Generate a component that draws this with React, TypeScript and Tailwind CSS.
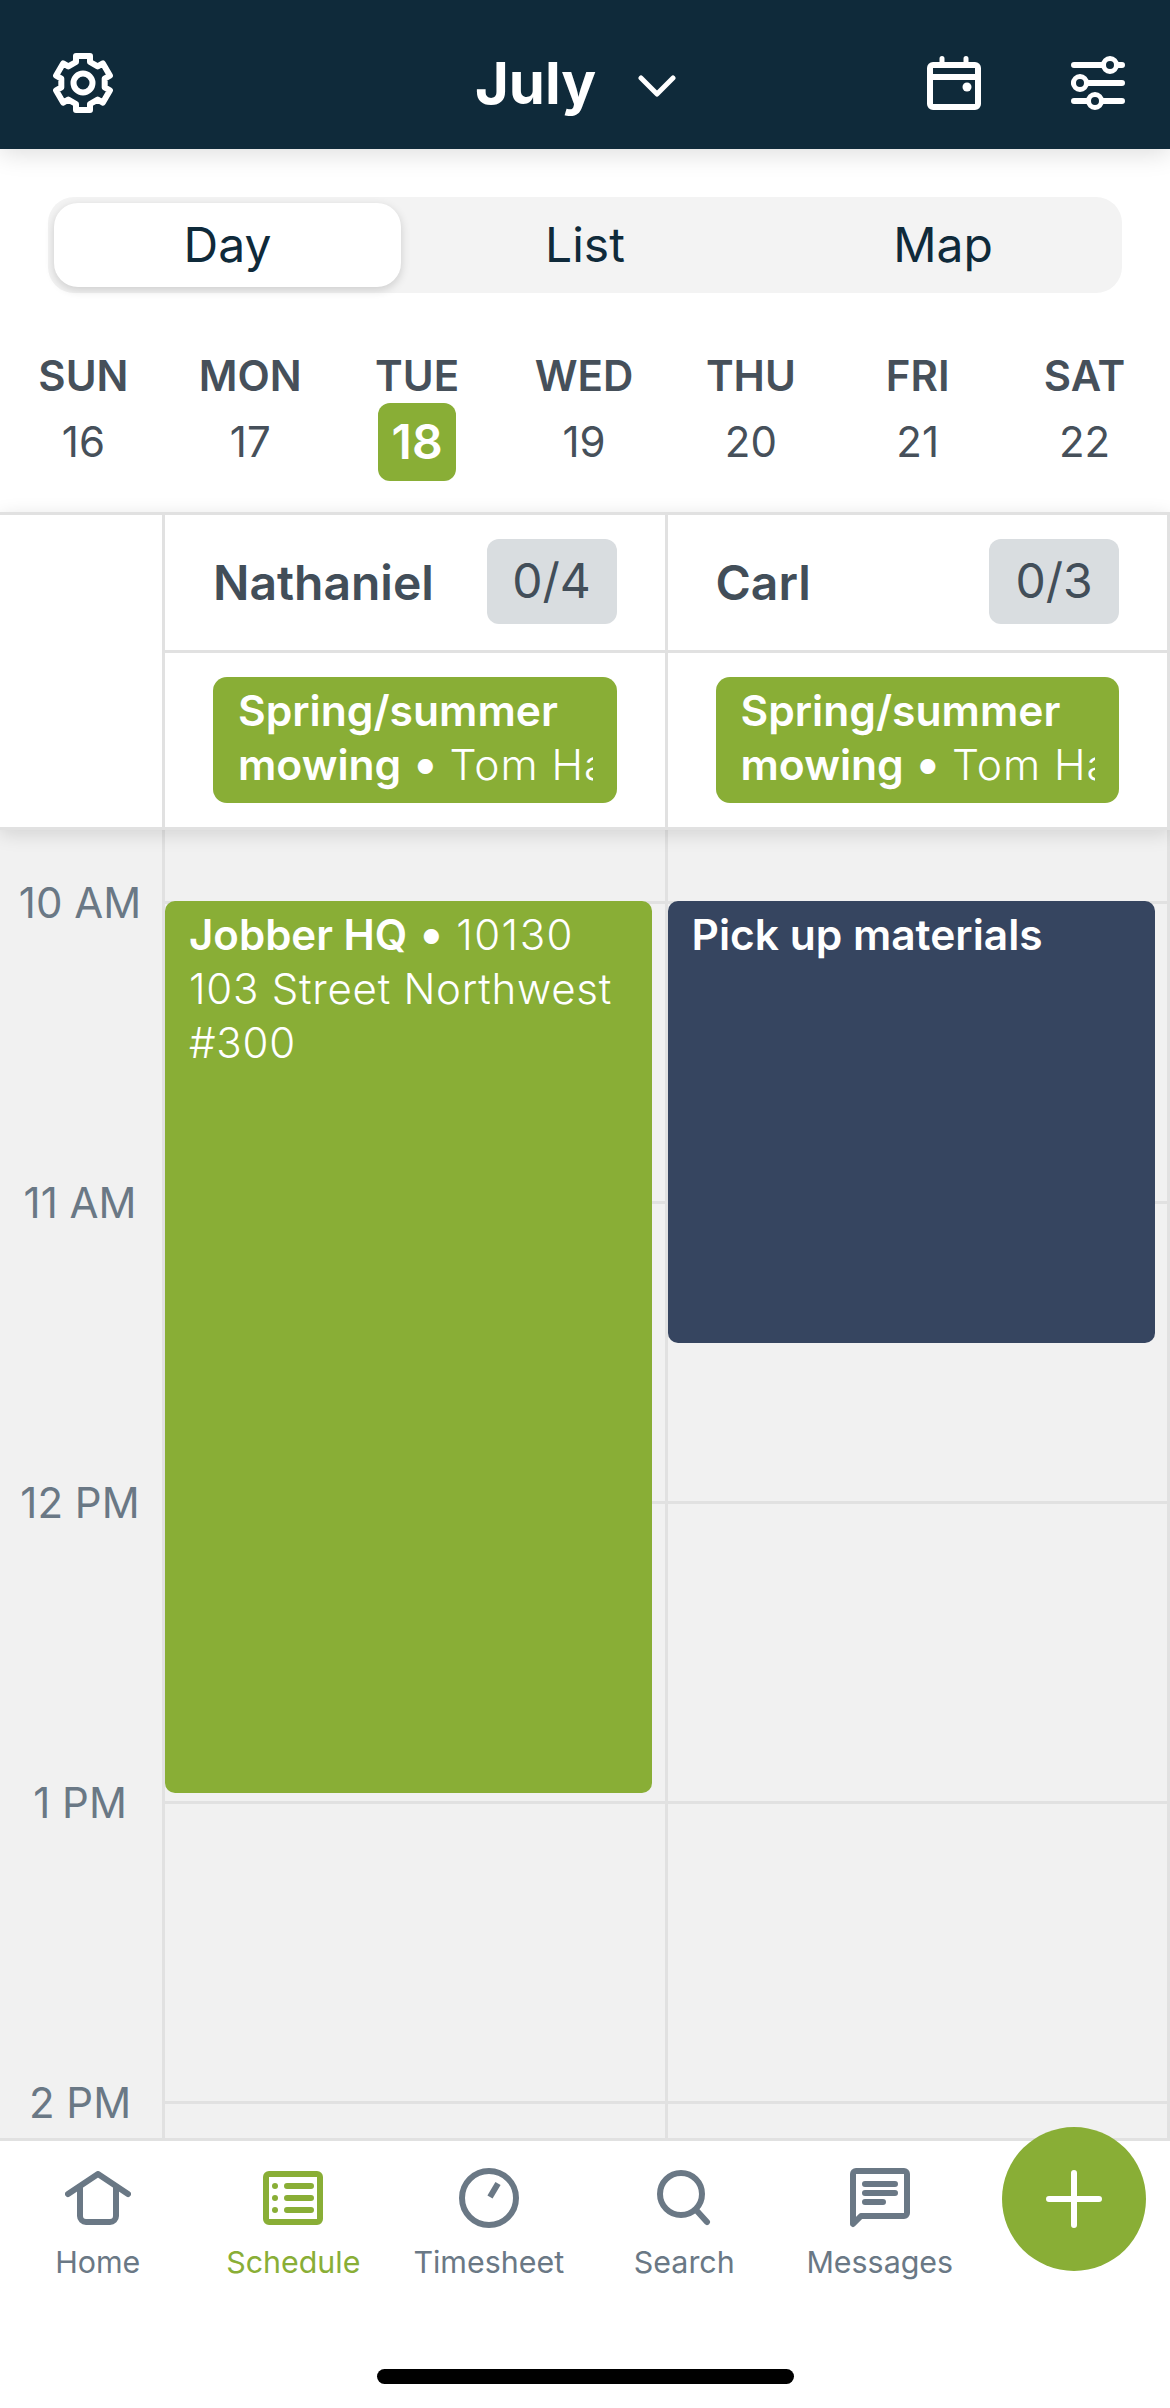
const GREEN = 'bg-[#89ae36]'

const days = [
  ['SUN', '16'],
  ['MON', '17'],
  ['TUE', '18'],
  ['WED', '19'],
  ['THU', '20'],
  ['FRI', '21'],
  ['SAT', '22'],
]

const hours = ['10 AM', '11 AM', '12 PM', '1 PM', '2 PM', '3 PM']

// cog outline: six flat teeth round a 30,30 centre
const cogPath = Array.from({ length: 6 }, (_, i) => {
  const a = (i * Math.PI) / 3
  const pt = (x: number, y: number) =>
    `${(30 + x * Math.cos(a) - y * Math.sin(a)).toFixed(2)} ${(30 + x * Math.sin(a) + y * Math.cos(a)).toFixed(2)}`
  return `${i === 0 ? 'M' : 'L'}${pt(-7, -21)} L${pt(-7, -27)} L${pt(7, -27)} L${pt(7, -21)}`
}).join(' ') + ' Z'

function Gear() {
  return (
    <svg width="60" height="60" viewBox="0 0 60 60" fill="none" stroke="white" strokeWidth="6" strokeLinejoin="round">
      <path d={cogPath} />
      <circle cx="30" cy="30" r="9.5" />
    </svg>
  )
}

function CalendarIcon() {
  return (
    <svg width="54" height="54" viewBox="0 0 54 54" fill="none" stroke="white" strokeWidth="6" strokeLinecap="round">
      <rect x="3" y="9" width="48" height="42" rx="3" />
      <path d="M3 21H51" strokeLinecap="butt" />
      <path d="M15 2.5V9M39 2.5V9" strokeWidth="5" />
      <circle cx="40" cy="31" r="4.5" fill="white" stroke="none" />
    </svg>
  )
}

function SlidersIcon() {
  return (
    <svg width="54" height="54" viewBox="0 0 54 54" fill="none" stroke="white" strokeWidth="6" strokeLinecap="round">
      <path d="M3 9H51M3 27H51M3 45H51" />
      <circle cx="39" cy="9" r="6.5" fill="#0f2a3a" strokeWidth="5" />
      <circle cx="9" cy="27" r="6.5" fill="#0f2a3a" strokeWidth="5" />
      <circle cx="24" cy="45" r="6.5" fill="#0f2a3a" strokeWidth="5" />
    </svg>
  )
}

function HomeIcon() {
  return (
    <svg width="66" height="54" viewBox="0 0 66 54" fill="none" stroke="#6a7885" strokeWidth="6" strokeLinecap="round" strokeLinejoin="round">
      <path d="M3 23L33 3L63 23" />
      <path d="M15 16V45a6 6 0 0 0 6 6H45a6 6 0 0 0 6-6V16" />
    </svg>
  )
}

function ScheduleIcon() {
  return (
    <svg width="60" height="54" viewBox="0 0 60 54" fill="none" stroke="#89ae36" strokeWidth="6" strokeLinecap="round">
      <rect x="3" y="3" width="54" height="48" rx="3" />
      <path d="M24 15H48M24 27H48M24 39H48" />
      <circle cx="12" cy="15" r="3" fill="#89ae36" stroke="none" />
      <circle cx="12" cy="27" r="3" fill="#89ae36" stroke="none" />
      <circle cx="12" cy="39" r="3" fill="#89ae36" stroke="none" />
    </svg>
  )
}

function ClockIcon() {
  return (
    <svg width="60" height="60" viewBox="0 0 60 60" fill="none" stroke="#6a7885" strokeWidth="6">
      <circle cx="30" cy="30" r="27" />
      <path d="M31 29L39 15.5" />
    </svg>
  )
}

function SearchIcon() {
  return (
    <svg width="54" height="56" viewBox="0 0 54 56" fill="none" stroke="#6a7885" strokeWidth="6" strokeLinecap="round">
      <circle cx="24" cy="24" r="21" />
      <path d="M40 41L50 52" />
    </svg>
  )
}

function MessageIcon() {
  return (
    <svg width="60" height="60" viewBox="0 0 60 60" fill="none" stroke="#6a7885" strokeWidth="6" strokeLinecap="round" strokeLinejoin="round">
      <path d="M3 56V6a3 3 0 0 1 3-3H54a3 3 0 0 1 3 3V45a3 3 0 0 1-3 3H11Z" />
      <path d="M15 16H45M15 25H45M15 34H33" />
    </svg>
  )
}

function PlusIcon() {
  return (
    <svg width="56" height="58" viewBox="0 0 56 58" fill="none" stroke="white" strokeWidth="6" strokeLinecap="round">
      <path d="M28 3V55M3 29H53" />
    </svg>
  )
}

function StaffHeader({ name, count }: { name: string; count: string }) {
  return (
    <div className="flex-1 min-w-0 border-l-[3px] border-[#e1e1e1] last:border-r-[3px] flex flex-col">
      <div className="h-[135px] flex items-center justify-between pl-[48px] pr-[48px]">
        <span className="text-[48px] font-semibold text-[#424e59] leading-none">{name}</span>
        <span className="-mt-[3px] w-[130px] h-[85px] rounded-[12px] bg-[#d9dde0] flex items-center justify-center text-[48px] text-[#424e59] leading-none">
          {count}
        </span>
      </div>
      <div className="h-[177px] border-t-[3px] border-[#e1e1e1] pl-[48px] pr-[48px] pt-[24px]">
        <div className={`h-[126px] rounded-[14px] ${GREEN} pl-[25px] pr-[24px] pt-[7px] text-white text-[42.6px] leading-[54px]`}>
          <div className="font-semibold">Spring/summer</div>
          <div className="overflow-hidden whitespace-nowrap">
            <span className="font-semibold">mowing</span>
            <span className="font-semibold mx-[12px] text-[48px] leading-none">•</span>
            <span className="font-light tracking-[1px]">Tom Hanks Lawn Care</span>
          </div>
        </div>
      </div>
    </div>
  )
}

function HourLines() {
  return (
    <>
      <div className="h-[74px] border-b-[3px] border-[#e1e1e1]" />
      {[0, 1, 2, 3].map((i) => (
        <div key={i} className="h-[300px] border-b-[3px] border-[#e1e1e1]" />
      ))}
    </>
  )
}

function NavItem({ label, active, children }: { label: string; active?: boolean; children: React.ReactNode }) {
  return (
    <div className="flex flex-col items-center">
      <div className="h-[60px] flex items-center justify-center">{children}</div>
      <span className={`mt-[16px] text-[30.4px] leading-[36px] ${active ? 'text-[#89ae36]' : 'text-[#6a7885]'}`}>{label}</span>
    </div>
  )
}

export default function App() {
  return (
    <div className="relative w-[1170px] h-[2408px] overflow-hidden bg-white flex flex-col font-['Inter',sans-serif]">
      {/* Top bar */}
      <header className="relative z-20 h-[149px] shrink-0 bg-[#0f2a3a] shadow-[0_4px_24px_rgba(0,0,0,0.14)] flex items-center pl-[53px] pr-[45px] pt-[17px]">
        <Gear />
        <div className="flex-1 flex items-center justify-center pl-[111px]">
          <span className="text-[58px] font-bold text-white leading-none">July</span>
          <svg className="ml-[42px] mt-[6px]" width="38" height="22" viewBox="0 0 38 22" fill="none" stroke="white" strokeWidth="5" strokeLinecap="round" strokeLinejoin="round">
            <path d="M3 3L19 19L35 3" />
          </svg>
        </div>
        <div className="flex items-center gap-[90px]">
          <CalendarIcon />
          <SlidersIcon />
        </div>
      </header>

      {/* Day / List / Map */}
      <div className="shrink-0 px-[48px] pt-[48px]">
        <div className="h-[96px] rounded-[26px] bg-[#f3f3f3] grid grid-cols-3 text-[48px] text-[#0f2a3a]">
          <div className="m-[6px] mr-[5px] rounded-[24px] bg-white shadow-[0_3px_10px_rgba(0,0,0,0.16)] flex items-center justify-center">Day</div>
          <div className="flex items-center justify-center">List</div>
          <div className="flex items-center justify-center">Map</div>
        </div>
      </div>

      {/* Week strip */}
      <div className="shrink-0 h-[219px] pt-[58px] pr-[2px] grid grid-cols-7">
        {days.map(([d, n]) => (
          <div key={d} className="flex flex-col items-center text-[#46505a]">
            <span className="text-[42px] font-semibold leading-[50px]">{d}</span>
            <span className={`mt-[2px] w-[78px] h-[78px] rounded-[12px] flex items-center justify-center leading-none ${n === '18' ? `${GREEN} text-white font-semibold text-[48px]` : 'text-[42px]'}`}>
              {n}
            </span>
          </div>
        ))}
      </div>

      {/* Staff columns */}
      <div className="relative z-10 shrink-0 bg-white border-t-[3px] border-b-[3px] border-[#e1e1e1] shadow-[0_4px_18px_rgba(0,0,0,0.13)] flex">
        <div className="w-[162px] shrink-0" />
        <StaffHeader name="Nathaniel" count="0/4" />
        <StaffHeader name="Carl" count="0/3" />
      </div>

      {/* Time grid */}
      <div className="flex-1 min-h-0 overflow-hidden bg-[#f1f1f1] flex">
        <div className="w-[160px] mr-[2px] shrink-0 -mt-[78px] text-[42px] text-[#6a7885]">
          {hours.map((h) => (
            <div key={h} className="h-[300px] flex items-center justify-center">{h}</div>
          ))}
        </div>
        <div className="relative flex-1 min-w-0 border-l-[3px] border-[#e1e1e1]">
          <HourLines />
          <div className={`absolute left-0 top-[71px] w-[487px] h-[892px] rounded-[10px] ${GREEN} px-[24px] pt-[7px] text-[42px] leading-[54px] text-white font-light tracking-[0.75px]`}>
            <span className="font-semibold tracking-normal">Jobber HQ</span>
            <span className="font-semibold text-[48px] leading-none mx-[12px]">•</span>
            <span className="tracking-[1.5px]">10130</span> 103 Street Northwest #300
          </div>
        </div>
        <div className="relative flex-1 min-w-0 border-l-[3px] border-r-[3px] border-[#e1e1e1]">
          <HourLines />
          <div className="absolute left-0 top-[71px] w-[487px] h-[442px] rounded-[10px] bg-[#364560] px-[24px] pt-[7px] text-[42.5px] leading-[54px] text-white font-semibold">
            Pick up materials
          </div>
        </div>
      </div>

      {/* Bottom nav */}
      <nav className="relative z-10 shrink-0 h-[270px] bg-white border-t-[3px] border-[#e1e1e1]">
        <div className="grid grid-cols-[repeat(5,195.5px)] pt-[27px]">
          <NavItem label="Home"><HomeIcon /></NavItem>
          <NavItem label="Schedule" active><ScheduleIcon /></NavItem>
          <NavItem label="Timesheet"><ClockIcon /></NavItem>
          <NavItem label="Search"><SearchIcon /></NavItem>
          <NavItem label="Messages"><MessageIcon /></NavItem>
        </div>
        <div className="absolute left-[377px] top-[228px] w-[417px] h-[15px] rounded-full bg-black" />
      </nav>

      {/* Add button */}
      <div className={`absolute z-20 left-[1002px] top-[2127px] w-[144px] h-[144px] rounded-full ${GREEN} flex items-center justify-center`}>
        <PlusIcon />
      </div>
    </div>
  )
}
